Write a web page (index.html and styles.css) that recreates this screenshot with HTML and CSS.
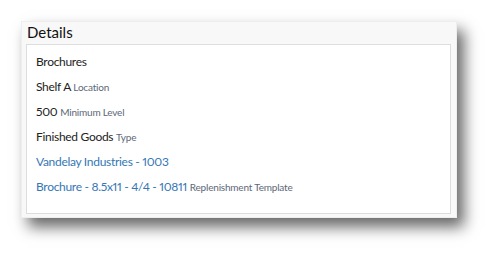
FILE: index.html
```html
<!DOCTYPE html>
<html>
<head>
  <meta charset="UTF-8">
  <title>Details</title>
  <link rel="stylesheet" href="styles.css">
</head>
<body>
  <div class="panel">
    <div class="panel-heading">Details</div>
    <div class="panel-body">
      <div class="row">Brochures</div>
      <div class="row">Shelf A <span class="label">Location</span></div>
      <div class="row">500 <span class="label">Minimum Level</span></div>
      <div class="row">Finished Goods <span class="label">Type</span></div>
      <div class="row"><a href="#">Vandelay Industries - 1003</a></div>
      <div class="row"><a href="#">Brochure - 8.5x11 - 4/4 - 10811</a> <span class="label">Replenishment Template</span></div>
    </div>
  </div>
</body>
</html>
```
FILE: styles.css
```css
html, body {
  height: 100%;
}
body {
  margin: 0;
  background: #fff;
  font-family: Lato, "Open Sans", sans-serif;
  font-variant-numeric: proportional-nums;
  color: #222;
  padding-top: 21px;
  box-sizing: border-box;
}
.panel {
  margin-left: 21px;
  width: 436px;
  height: 197px;
  box-sizing: border-box;
  padding: 0 5px 4px 4px;
  background: #f8f8f8;
  border: 1px solid #eee;
  box-shadow: 7px 9px 14px rgba(0, 0, 0, 0.6);
}
.panel-heading {
  height: 22px;
  line-height: 20px;
  font-size: 15px;
  padding-left: 1px;
  color: #111;
}
.panel-body {
  height: 170px;
  box-sizing: border-box;
  background: #fff;
  border: 1px solid #ddd;
  padding: 4px 0 0 9px;
}
.row {
  height: 25px;
  line-height: 25px;
  font-size: 12px;
  letter-spacing: -0.3px;
}
.label {
  font-size: 10px;
  letter-spacing: -0.2px;
  color: #5d6878;
}
a {
  color: #3577b5;
  text-decoration: none;
}
```
